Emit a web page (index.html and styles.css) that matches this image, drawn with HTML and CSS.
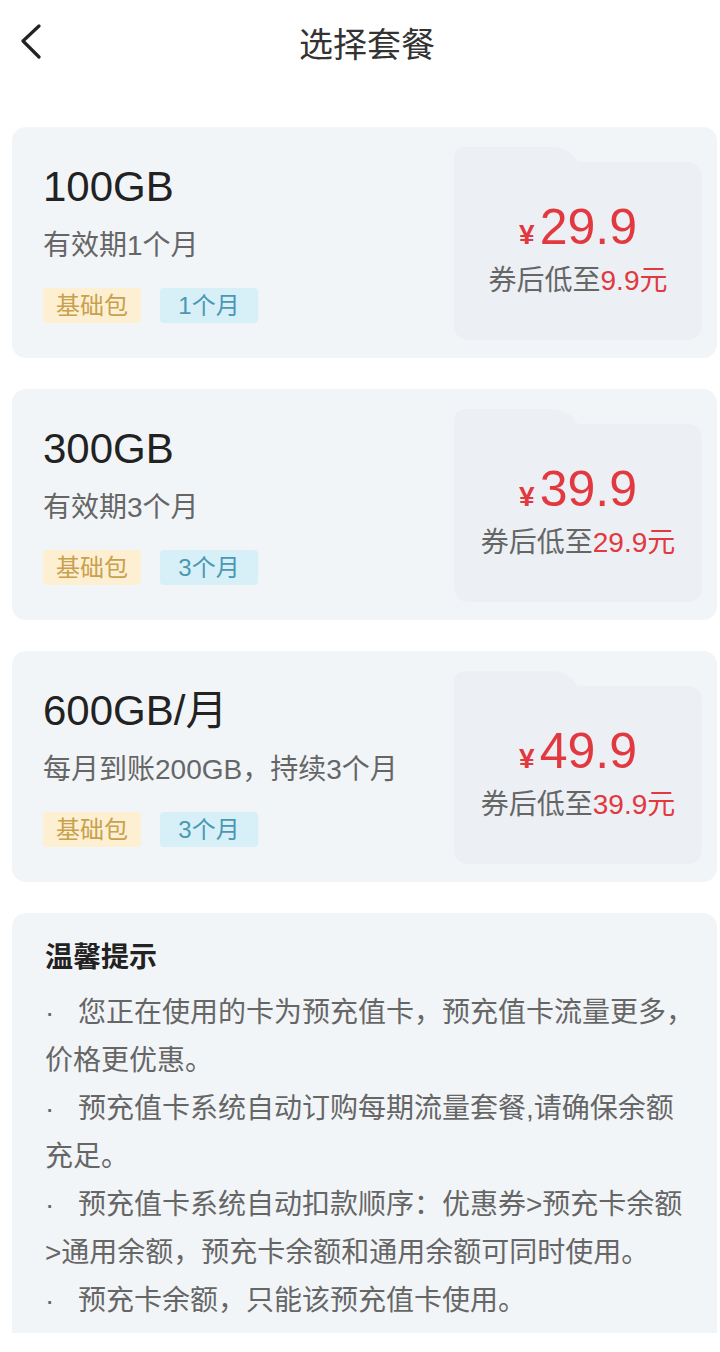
FILE: index.html
```html
<!DOCTYPE html>
<html lang="zh-CN">
<head>
    <meta charset="UTF-8">
    <meta name="viewport" content="width=device-width, initial-scale=1.0">
    <title>选择套餐</title>
    <link rel="stylesheet" href="styles.css">
</head>
<body>

    <header class="top-bar">
        <span class="back-btn">
            <svg width="24" height="36" viewBox="0 0 24 36">
                <path d="M19 3 L3 18 L19 34" fill="none" stroke="#222" stroke-width="3.2" stroke-linecap="round" stroke-linejoin="round"/>
            </svg>
        </span>
        <h1>选择套餐</h1>
    </header>

    <div class="plan-list">
        <!-- 100GB -->
        <div class="plan-card">
            <div class="plan-info">
                <div class="plan-name">100GB</div>
                <div class="plan-desc">有效期1个月</div>
                <div class="tag-row">
                    <span class="tag tag-base">基础包</span>
                    <span class="tag tag-month">1个月</span>
                </div>
            </div>
            <div class="price-box">
                <div class="price"><span class="yen">¥</span>29.9</div>
                <div class="coupon">券后低至<span class="red">9.9元</span></div>
            </div>
        </div>

        <!-- 300GB -->
        <div class="plan-card">
            <div class="plan-info">
                <div class="plan-name">300GB</div>
                <div class="plan-desc">有效期3个月</div>
                <div class="tag-row">
                    <span class="tag tag-base">基础包</span>
                    <span class="tag tag-month">3个月</span>
                </div>
            </div>
            <div class="price-box">
                <div class="price"><span class="yen">¥</span>39.9</div>
                <div class="coupon">券后低至<span class="red">29.9元</span></div>
            </div>
        </div>

        <!-- 600GB -->
        <div class="plan-card">
            <div class="plan-info">
                <div class="plan-name">600GB/月</div>
                <div class="plan-desc">每月到账200GB，持续3个月</div>
                <div class="tag-row">
                    <span class="tag tag-base">基础包</span>
                    <span class="tag tag-month">3个月</span>
                </div>
            </div>
            <div class="price-box">
                <div class="price"><span class="yen">¥</span>49.9</div>
                <div class="coupon">券后低至<span class="red">39.9元</span></div>
            </div>
        </div>

        <div class="tips">
            <h3>温馨提示</h3>
            <p class="tip">您正在使用的卡为预充值卡，预充值卡流量更多，价格更优惠。</p>
            <p class="tip">预充值卡系统自动订购每期流量套餐,请确保余额充足。</p>
            <p class="tip">预充值卡系统自动扣款顺序：优惠券&gt;预充卡余额&gt;通用余额，预充卡余额和通用余额可同时使用。</p>
            <p class="tip">预充卡余额，只能该预充值卡使用。</p>
        </div>
    </div>

</body>
</html>
```

FILE: styles.css
```css
body {
    margin: 0;
    font-family: "Liberation Sans", "Noto Sans CJK SC", sans-serif;
    background: #fff;
    color: #222;
}

/* Header */
.top-bar {
    height: 84px;
    display: flex;
    align-items: center;
    justify-content: center;
    position: relative;
    padding-left: 14px;
}

.top-bar h1 {
    margin: 0;
    font-size: 34px;
    font-weight: normal;
    color: #333;
}

.back-btn {
    position: absolute;
    left: 20px;
    top: 23px;
    display: flex;
}

/* Plan cards */
.plan-list {
    padding: 43px 3px 0 12px;
}

.plan-card {
    display: flex;
    background: #f2f5f8;
    border-radius: 14px;
    height: 231px;
    margin-bottom: 31px;
}

.plan-info {
    flex: 1;
    padding: 36px 0 0 31px;
}

.plan-name {
    font-size: 42px;
    line-height: 48px;
    color: #222;
}

.plan-desc {
    margin-top: 15px;
    font-size: 28px;
    line-height: 40px;
    color: #666;
}

.tag-row {
    display: flex;
    gap: 19px;
    margin-top: 22px;
}

.tag {
    width: 98px;
    height: 35px;
    line-height: 35px;
    text-align: center;
    font-size: 24px;
    border-radius: 4px;
}

.tag-base {
    background: #fcefd2;
    color: #c9a04c;
}

.tag-month {
    background: #d7f0f8;
    color: #4b98b4;
}

/* Price box with folder tab */
.price-box {
    position: relative;
    width: 248px;
    margin: 35px 15px 18px 0;
    background: #ecf0f5;
    border-radius: 0 14px 14px 14px;
    display: flex;
    flex-direction: column;
    align-items: center;
    justify-content: center;
}

.price-box::before {
    content: "";
    position: absolute;
    left: 0;
    top: -15px;
    width: 128px;
    height: 30px;
    background: #ecf0f5;
    border-radius: 14px 40px 0 0;
}

.price {
    position: relative;
    font-size: 50px;
    line-height: 56px;
    color: #e2383f;
    margin-top: -4px;
}

.yen {
    font-size: 28px;
    font-weight: bold;
    margin-right: 5px;
}

.coupon {
    position: relative;
    font-size: 28px;
    line-height: 36px;
    color: #666;
    white-space: nowrap;
}

.red {
    color: #e2383f;
}

/* Tips */
.tips {
    background: #f2f5f8;
    border-radius: 14px 14px 0 0;
    padding: 21px 22px 8px 33px;
}

.tips h3 {
    margin: 0 0 7px;
    font-size: 28px;
    line-height: 48px;
    font-weight: bold;
    color: #222;
}

.tip {
    margin: 0;
    font-size: 28px;
    line-height: 48px;
    color: #666;
}

.tip::before {
    content: "·";
    display: inline-block;
    width: 33px;
    font-family: "Liberation Sans", sans-serif;
}
```
